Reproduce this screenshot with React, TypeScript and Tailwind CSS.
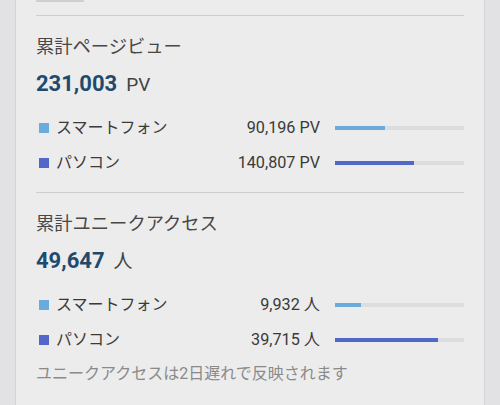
type Row = {
  label: string
  value: number
  color: string
}

type Section = {
  title: string
  total: number
  unit: string
  rows: Row[]
}

const sections: Section[] = [
  {
    title: '累計ページビュー',
    total: 231003,
    unit: 'PV',
    rows: [
      { label: 'スマートフォン', value: 90196, color: '#6aabdc' },
      { label: 'パソコン', value: 140807, color: '#5168c9' },
    ],
  },
  {
    title: '累計ユニークアクセス',
    total: 49647,
    unit: '人',
    rows: [
      { label: 'スマートフォン', value: 9932, color: '#6aabdc' },
      { label: 'パソコン', value: 39715, color: '#5168c9' },
    ],
  },
]

const font = { fontFamily: 'Roboto, "Noto Sans CJK JP", sans-serif' }

function StatRow({ row, total, unit }: { row: Row; total: number; unit: string }) {
  const pct = (row.value / total) * 100
  return (
    <div className="flex items-center h-[24px]">
      <span className="w-[10px] h-[10px] ml-[3px] mr-[7px]" style={{ backgroundColor: row.color }} />
      <span className="flex-1 text-[16px] leading-[24px] text-[#3a3a3a]">{row.label}</span>
      <span className="text-[16.2px] leading-[24px] text-[#3a3a3a] text-right">
        {row.value.toLocaleString('en-US')} {unit}
      </span>
      <div className="ml-[15px] w-[129px] h-[4px] bg-[#dcdddf]">
        <div className="h-full" style={{ width: `${pct}%`, backgroundColor: row.color }} />
      </div>
    </div>
  )
}

export default function App() {
  return (
    <div className="w-[500px] h-[405px] bg-[#e2e2e4] px-[15px] overflow-hidden" style={font}>
      <div className="h-full bg-[#ececec] border-x border-[#d4d4d6] px-[20px]">
        <div className="h-[2px] w-[48px] bg-[#cfcfcf]" />
        <div className="mt-[13px] h-px bg-[#cdcdcd]" />

        {sections.map((s, i) => (
          <div key={s.title}>
            {i > 0 && <div className="mt-[17px] h-px bg-[#cdcdcd]" />}
            <div className="mt-[18px] text-[18.3px] leading-[26px] text-[#474747]">{s.title}</div>
            <div className="mt-[9px] h-[30px] flex items-baseline leading-[30px]">
              <span className="text-[22px] font-bold text-[#1f4a6e]">{s.total.toLocaleString('en-US')}</span>
              <span className="ml-[9px] text-[19px] text-[#444]">{s.unit}</span>
            </div>
            <div className="mt-[17px] flex flex-col gap-[11px]">
              {s.rows.map(r => (
                <StatRow key={r.label} row={r} total={s.total} unit={s.unit} />
              ))}
            </div>
          </div>
        ))}

        <div className="mt-[10px] text-[16px] leading-[24px] text-[#8a8a8a]">
          ユニークアクセスは2日遅れで反映されます
        </div>
      </div>
    </div>
  )
}
